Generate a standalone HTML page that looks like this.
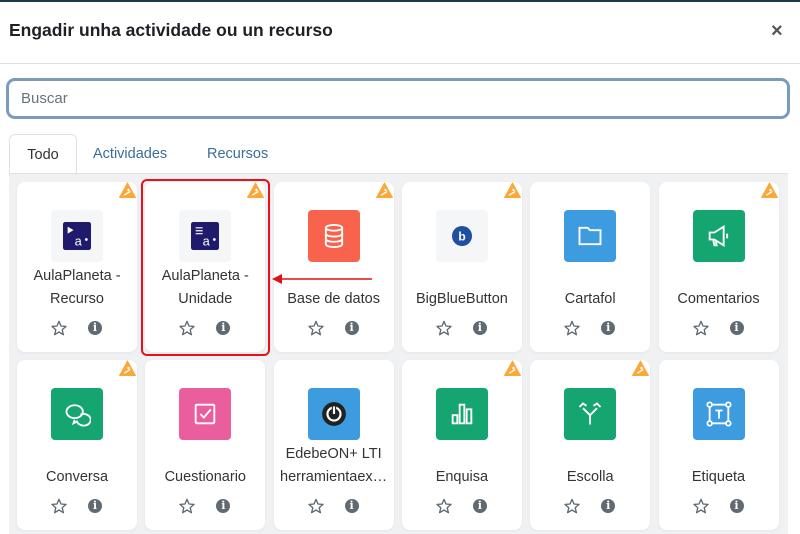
<!DOCTYPE html>
<html><head><style>
*{box-sizing:border-box;margin:0;padding:0}
body{width:800px;height:534px;overflow:hidden;background:#fff;font-family:"Liberation Sans",sans-serif;position:relative}
.top{position:absolute;left:0;top:0;width:800px;height:2px;background:#1d3a4a}
h1{position:absolute;left:9px;top:20px;font-size:17.5px;font-weight:bold;color:#1d2125}
.x{position:absolute;left:771px;top:20px;font-size:20px;color:#555;font-weight:bold}
.hr{position:absolute;left:0;top:63px;width:800px;height:1px;background:#dee2e6}
.search{position:absolute;left:6px;top:78px;width:784px;height:41px;border:3px solid #7a9cbc;border-radius:9px;font-size:15px;color:#6a737b;padding:9px 12px}
.tabs{position:absolute;left:9px;top:134px;font-size:14.5px}
.tab{position:absolute;top:0;height:40px;padding-top:12px;color:#3a6d9a;white-space:nowrap}
.tab.a{left:0;width:68px;border:1px solid #dee2e6;border-bottom:none;border-radius:6px 6px 0 0;background:#fff;color:#333;text-align:center}
.area{position:absolute;left:9px;top:173px;width:779px;height:361px;background:#f0f1f3;border-top:1px solid #dee2e6}
.card{position:absolute;width:120px;height:170px;background:#fff;border-radius:8px;box-shadow:0 1px 3px rgba(0,0,0,.05)}
.ic{position:absolute;left:34px;top:28px;width:52px;height:52px;border-radius:4px;display:flex;align-items:center;justify-content:center}
.nm{position:absolute;left:0;width:120px;text-align:center;font-size:14.5px;color:#333;line-height:23px}
.st{position:absolute;left:34px;top:138px}
.inf{position:absolute;left:71px;top:139px;width:14px;height:14px;border-radius:50%;background:#606a73;color:#fff;font:bold 11px "DejaVu Serif",serif;text-align:center;line-height:14px}
.tri{position:absolute;right:1px;top:0}
</style></head><body>
<div class="top"></div>
<h1>Engadir unha actividade ou un recurso</h1>
<div class="x">×</div>
<div class="hr"></div>
<div class="search">Buscar</div>
<div class="tabs">
<div class="tab a">Todo</div>
<div class="tab" style="left:84px">Actividades</div>
<div class="tab" style="left:198px">Recursos</div>
</div>
<div class="area"></div>
<div id="cards"></div>
<div style="position:absolute;left:141px;top:179px;width:129px;height:177px;border:2px solid #e8101a;border-radius:6px"></div>
<svg style="position:absolute;left:272px;top:272px" width="102" height="14"><line x1="8" y1="7" x2="100" y2="7" stroke="#e0101a" stroke-width="1.5"/><path d="M0 7 L10 2 L10 12 Z" fill="#e0101a"/></svg>
<script>
const tri='<svg class="tri" width="17" height="16" viewBox="0 0 18 16"><path d="M9 0.5 L17.5 16 L0.5 16Z" fill="#f9a83a" stroke="#f9a83a" stroke-linejoin="round"/><path d="M5.5 13.5 L12 9.5" stroke="#fff" stroke-width="1.4"/><circle cx="10" cy="8" r="1.3" fill="#fff"/></svg>';
const star='<svg class="st" width="16" height="16" viewBox="0 0 24 24"><path d="M12 2l3 7 7.5.6-5.7 5 1.8 7.4L12 18l-6.6 4 1.8-7.4-5.7-5L9 9z" fill="none" stroke="#606a73" stroke-width="2" stroke-linejoin="round"/></svg>';
const W='stroke="#fff" stroke-width="1.6" fill="none"';
const S='width="28" height="28" viewBox="0 0 24 24"';
const icons={
ap1:['#f5f6f8','<svg '+S+'><rect width="24" height="24" rx="2" fill="#1f1a6b"/><path d="M4 4 L9 7 L4 10Z" fill="#fff"/><text x="10" y="20" fill="#fff" font-size="11" font-family="Liberation Sans">a</text><circle cx="20" cy="15" r="1.2" fill="#fff"/></svg>'],
ap2:['#f5f6f8','<svg '+S+'><rect width="24" height="24" rx="2" fill="#1f1a6b"/><path d="M4 5h6M4 7.5h6M4 10h6" stroke="#fff"/><text x="10" y="20" fill="#fff" font-size="11" font-family="Liberation Sans">a</text><circle cx="20" cy="15" r="1.2" fill="#fff"/></svg>'],
db:['#f7634d','<svg '+S+'><ellipse cx="12" cy="5" rx="7" ry="2.5" '+W+'/><path d="M5 5v14c0 1.4 3 2.5 7 2.5s7-1.1 7-2.5V5M5 10c0 1.4 3 2.5 7 2.5s7-1.1 7-2.5M5 14.5c0 1.4 3 2.5 7 2.5s7-1.1 7-2.5" '+W+'/></svg>'],
bbb:['#f5f6f8','<svg width="24" height="24"><circle cx="12" cy="12" r="10" fill="#1f4fa0"/><text x="12" y="16.5" fill="#fff" font-size="12" font-weight="bold" text-anchor="middle" font-family="Liberation Sans">b</text></svg>'],
fold:['#3d9be0','<svg '+S+'><path d="M3 5h7l2 2h9v12H3z" '+W+'/></svg>'],
com:['#14a571','<svg '+S+'><path d="M4 9h4l8-5v16l-8-5H4zM7 15l1 5h2l-1-5M19 10v4" '+W+'/></svg>'],
chat:['#14a571','<svg '+S+'><ellipse cx="10" cy="10" rx="7" ry="5.5" '+W+'/><path d="M15 12.5a6 5 0 1 1-3 6L9 20l1-3" '+W+'/></svg>'],
quiz:['#ea5e9e','<svg '+S+'><rect x="4" y="4" width="16" height="16" rx="1" '+W+'/><path d="M8 12l3 3 6-7" '+W+'/></svg>'],
edb:['#3d9be0','<svg width="26" height="26" viewBox="0 0 24 24"><circle cx="12" cy="12" r="11" fill="#222"/><circle cx="12" cy="12" r="6" fill="none" stroke="#fff" stroke-width="2"/><path d="M12 5v7" stroke="#222" stroke-width="4"/><path d="M12 5v7" stroke="#fff" stroke-width="2"/></svg>'],
enq:['#14a571','<svg '+S+'><rect x="4" y="13" width="4" height="7" '+W+'/><rect x="10" y="4" width="4" height="16" '+W+'/><rect x="16" y="8" width="4" height="12" '+W+'/></svg>'],
esc:['#14a571','<svg '+S+'><path d="M12 21v-8L6 7M12 13l6-6M3 6l3-3 3 2M21 6l-3-3-3 2" '+W+'/></svg>'],
eti:['#3d9be0','<svg '+S+'><rect x="4" y="4" width="16" height="16" '+W+'/><circle cx="4" cy="4" r="2" fill="#3d9be0" stroke="#fff" stroke-width="1.5"/><circle cx="20" cy="4" r="2" fill="#3d9be0" stroke="#fff" stroke-width="1.5"/><circle cx="4" cy="20" r="2" fill="#3d9be0" stroke="#fff" stroke-width="1.5"/><circle cx="20" cy="20" r="2" fill="#3d9be0" stroke="#fff" stroke-width="1.5"/><path d="M9 9h6M12 9v7" '+W+'/></svg>']
};
const cards=[
['ap1',['AulaPlaneta -','Recurso'],1],['ap2',['AulaPlaneta -','Unidade'],1],['db',['Base de datos'],1],['bbb',['BigBlueButton'],1],['fold',['Cartafol'],0],['com',['Comentarios'],1],
['chat',['Conversa'],1],['quiz',['Cuestionario'],0],['edb',['EdebeON+ LTI','herramientaex…'],0],['enq',['Enquisa'],1],['esc',['Escolla'],1],['eti',['Etiqueta'],0]];
let h='';
cards.forEach((c,i)=>{
 const x=17+(i%6)*128.3, y=182+Math.floor(i/6)*178;
 const [bg,svg]=icons[c[0]];
 const ny=c[1].length==2?83:106;
 h+=`<div class="card" style="left:${x}px;top:${y}px">${c[2]?tri:''}<div class="ic" style="background:${bg}">${svg}</div><div class="nm" style="top:${ny}px">${c[1].join('<br>')}</div>${star}<div class="inf">i</div></div>`;
});
document.getElementById('cards').innerHTML=h;
</script>
</body></html>
